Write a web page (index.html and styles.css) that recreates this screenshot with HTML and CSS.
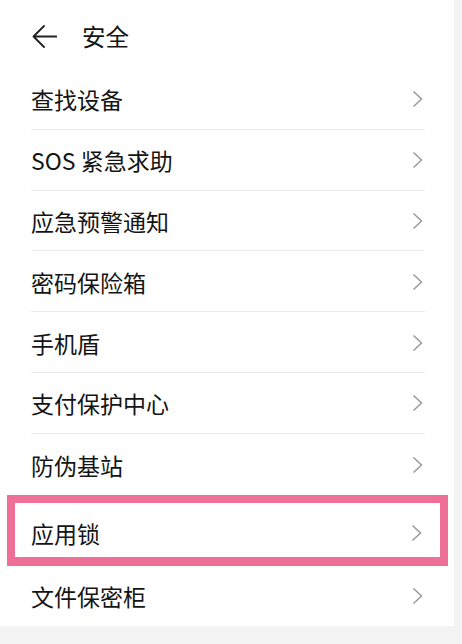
FILE: index.html
```html
<!DOCTYPE html>
<html lang="zh-CN">
<head>
<meta charset="utf-8">
<title>安全</title>
<link rel="stylesheet" href="styles.css">
</head>
<body>
<div class="screen">
  <header class="header">
    <svg class="back" width="25" height="23" viewBox="0 0 25 23" aria-hidden="true">
      <path d="M1.5 11.5 H24.5 M12 1 L1.5 11.5 L12 22" fill="none" stroke="#222" stroke-width="1.8" stroke-linecap="round" stroke-linejoin="round"/>
    </svg>
    <h1 class="title">安全</h1>
  </header>
  <ul class="list">
    <li class="row"><span class="label">查找设备</span><svg class="chev" width="11" height="18" viewBox="0 0 11 18"><path d="M1.5 1.5 L9.5 9 L1.5 16.5" fill="none" stroke="#9a9a9a" stroke-width="1.5"/></svg></li>
    <li class="row"><span class="label">SOS 紧急求助</span><svg class="chev" width="11" height="18" viewBox="0 0 11 18"><path d="M1.5 1.5 L9.5 9 L1.5 16.5" fill="none" stroke="#9a9a9a" stroke-width="1.5"/></svg></li>
    <li class="row"><span class="label">应急预警通知</span><svg class="chev" width="11" height="18" viewBox="0 0 11 18"><path d="M1.5 1.5 L9.5 9 L1.5 16.5" fill="none" stroke="#9a9a9a" stroke-width="1.5"/></svg></li>
    <li class="row"><span class="label">密码保险箱</span><svg class="chev" width="11" height="18" viewBox="0 0 11 18"><path d="M1.5 1.5 L9.5 9 L1.5 16.5" fill="none" stroke="#9a9a9a" stroke-width="1.5"/></svg></li>
    <li class="row"><span class="label">手机盾</span><svg class="chev" width="11" height="18" viewBox="0 0 11 18"><path d="M1.5 1.5 L9.5 9 L1.5 16.5" fill="none" stroke="#9a9a9a" stroke-width="1.5"/></svg></li>
    <li class="row"><span class="label">支付保护中心</span><svg class="chev" width="11" height="18" viewBox="0 0 11 18"><path d="M1.5 1.5 L9.5 9 L1.5 16.5" fill="none" stroke="#9a9a9a" stroke-width="1.5"/></svg></li>
    <li class="row row-plain"><span class="label">防伪基站</span><svg class="chev" width="11" height="18" viewBox="0 0 11 18"><path d="M1.5 1.5 L9.5 9 L1.5 16.5" fill="none" stroke="#9a9a9a" stroke-width="1.5"/></svg></li>
    <li class="row row-marked"><span class="label">应用锁</span><svg class="chev" width="11" height="18" viewBox="0 0 11 18"><path d="M1.5 1.5 L9.5 9 L1.5 16.5" fill="none" stroke="#9a9a9a" stroke-width="1.5"/></svg></li>
    <li class="row row-last"><span class="label">文件保密柜</span><svg class="chev" width="11" height="18" viewBox="0 0 11 18"><path d="M1.5 1.5 L9.5 9 L1.5 16.5" fill="none" stroke="#9a9a9a" stroke-width="1.5"/></svg></li>
  </ul>
</div>
</body>
</html>
```
FILE: styles.css
```css
* { box-sizing: border-box; }

html, body {
  margin: 0;
  padding: 0;
}

body {
  background: #f3f3f3;
  font-family: "Noto Sans CJK SC", "Noto Sans", sans-serif;
  color: #141414;
}

.screen {
  width: 454px;
  height: 626px;
  background: #ffffff;
  overflow: hidden;
}

.header {
  height: 69px;
  display: flex;
  align-items: flex-start;
  padding: 24px 0 0 32px;
}

.back {
  display: block;
  margin-top: 1px;
}

.title {
  margin: 0 0 0 25px;
  font-size: 23.5px;
  font-weight: 400;
  line-height: 24px;
  letter-spacing: 0;
}

.list {
  list-style: none;
  margin: 0;
  padding: 0;
}

.row {
  height: 60.8px;
  margin: 0 29px 0 31px;
  border-bottom: 1px solid #ebebeb;
  display: flex;
  align-items: center;
  justify-content: space-between;
  padding: 1px 2px 0 0;
}

.label {
  font-size: 23px;
  line-height: 28px;
  font-weight: 400;
}

.chev {
  display: block;
  flex: none;
}

.row-plain {
  border-bottom: none;
}

.row-marked {
  height: 71px;
  margin: 0 6px 0 7px;
  border: 8px solid #ee7099;
  border-bottom-width: 9px;
  padding: 7px 18px 0 16px;
}

.row-last {
  height: 60px;
  border-bottom: none;
}
```
